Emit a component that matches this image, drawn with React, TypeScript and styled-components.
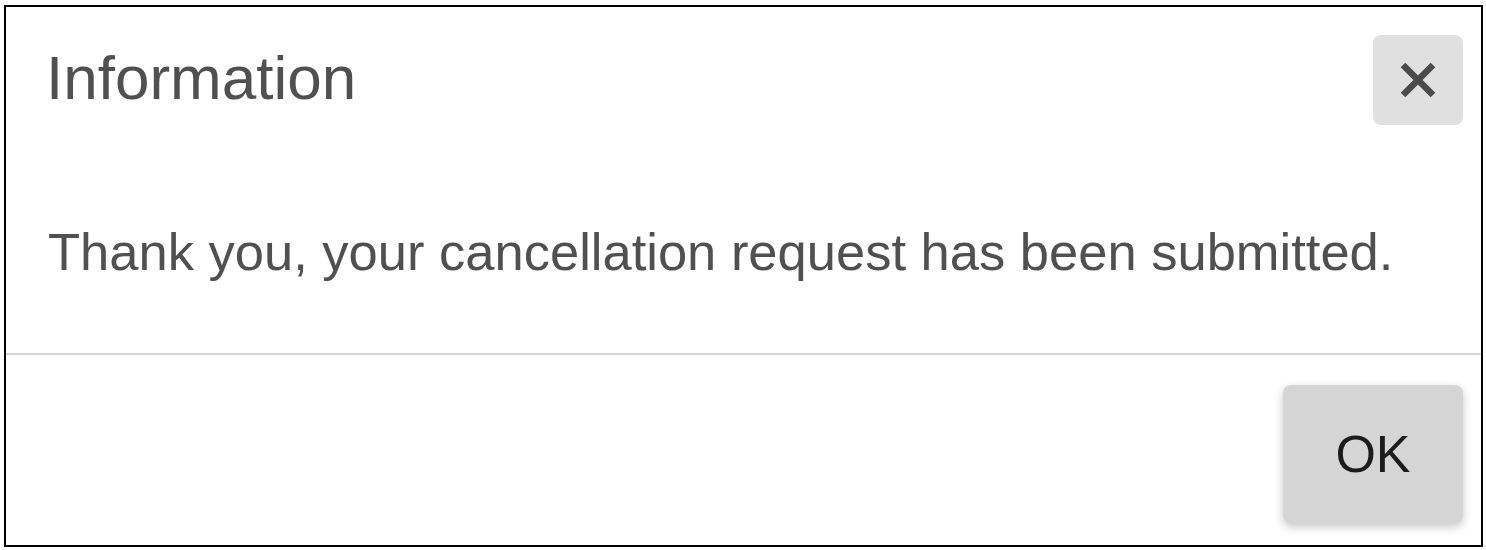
import { FC } from "react";
import styled, { createGlobalStyle } from "styled-components";

const GlobalStyle = createGlobalStyle`
  html, body {
    margin: 0;
    padding: 0;
    background: #fff;
  }
  body {
    font-family: "Liberation Sans", Arial, sans-serif;
  }
`;

const App: FC = () => {
  return (
    <>
      <GlobalStyle />
      <SPage>
        <SDialog role="dialog" aria-labelledby="dialog-title">
          {/* ヘッダー */}
          <SHeader>
            <STitle id="dialog-title">Information</STitle>
            <SCloseButton aria-label="Close">
              <svg width="38" height="38" viewBox="0 0 38 38">
                <path d="M4 4 L34 34 M34 4 L4 34" stroke="#4a4a4a" strokeWidth="6.5" />
              </svg>
            </SCloseButton>
          </SHeader>
          {/* 本文 */}
          <SBody>Thank you, your cancellation request has been submitted.</SBody>
          {/* フッター */}
          <SFooter>
            <SOkButton>OK</SOkButton>
          </SFooter>
        </SDialog>
      </SPage>
    </>
  );
};

export default App;

const SPage = styled.div`
  padding: 5px 0 0 4px;
`;
const SDialog = styled.div`
  box-sizing: border-box;
  display: flex;
  flex-direction: column;
  width: 1479px;
  height: 542px;
  border: 2px solid #000;
  background: #fff;
`;
const SHeader = styled.div`
  display: flex;
  justify-content: space-between;
  align-items: center;
  padding: 28px 18px 0 40px;
`;
const STitle = styled.h2`
  margin: 0;
  font-size: 62px;
  font-weight: 400;
  line-height: 1;
  color: #505050;
  transform: translateY(-2px);
`;
const SCloseButton = styled.button`
  display: flex;
  align-items: center;
  justify-content: center;
  width: 90px;
  height: 90px;
  padding: 0;
  border: none;
  border-radius: 8px;
  background: #e0e0e0;
  cursor: pointer;
`;
const SBody = styled.p`
  margin: 0;
  padding: 97px 42px 71px;
  font-size: 52.5px;
  line-height: 60px;
  color: #505050;
`;
const SFooter = styled.div`
  flex: 1;
  display: flex;
  justify-content: flex-end;
  align-items: flex-start;
  padding: 30px 18px 0;
  border-top: 2px solid #d6d6d6;
`;
const SOkButton = styled.button`
  width: 180px;
  height: 138px;
  padding: 0;
  border: none;
  border-radius: 8px;
  background: #d5d5d5;
  box-shadow: 0 4px 10px rgba(0, 0, 0, 0.22);
  font-family: "Liberation Sans", Arial, sans-serif;
  font-size: 52px;
  color: #1c1c1c;
  cursor: pointer;
`;
